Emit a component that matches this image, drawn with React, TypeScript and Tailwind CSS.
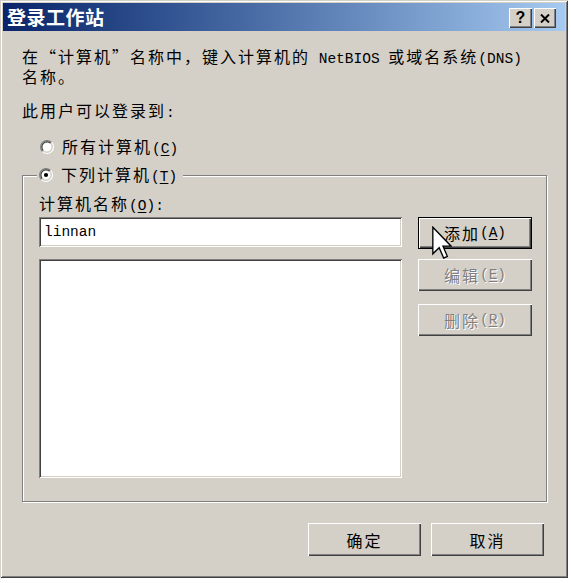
import type React from "react";

const cjk = "font-['Noto_Sans_CJK_SC',sans-serif]";
const mono = "font-['Liberation_Mono','Noto_Sans_CJK_SC',monospace] text-[14.5px] tracking-normal";

function Mn({children}: {children: React.ReactNode}) {
  return <span className={mono}>{children}</span>;
}

function Key({k}: {k: string}) {
  return (
    <Mn>
      (<u className="underline-offset-2">{k}</u>)
    </Mn>
  );
}

function Radio({checked}: {checked?: boolean}) {
  return (
    <svg width="14" height="14" viewBox="0 0 12 12" className="shrink-0">
      <circle cx="6" cy="6" r="4.2" fill="#fff" />
      <path d="M2.11 9.89 A5.5 5.5 0 0 1 9.89 2.11" stroke="#808080" fill="none" />
      <path d="M9.89 2.11 A5.5 5.5 0 0 1 2.11 9.89" stroke="#fff" fill="none" />
      <path d="M2.82 9.18 A4.5 4.5 0 0 1 9.18 2.82" stroke="#404040" fill="none" />
      <path d="M9.18 2.82 A4.5 4.5 0 0 1 2.82 9.18" stroke="#D4D0C8" fill="none" />
      {checked && <circle cx="6" cy="6" r="1.8" fill="#000" />}
    </svg>
  );
}

function Button({children, disabled, isDefault, className = ""}: {children: React.ReactNode; disabled?: boolean; isDefault?: boolean; className?: string}) {
  return (
    <div
      className={`flex items-center justify-center bg-[#D4D0C8] text-[16px] leading-[16px] ${
        isDefault
          ? "border border-black shadow-[inset_1px_1px_#fff,inset_-1px_-1px_#404040,inset_-2px_-2px_#808080]"
          : "shadow-[inset_1px_1px_#fff,inset_-1px_-1px_#404040,inset_-2px_-2px_#808080]"
      } ${disabled ? "text-[#808080] [text-shadow:1px_1px_0_#fff]" : "text-black"} ${className}`}
    >
      {children}
    </div>
  );
}

function Cursor() {
  return (
    <svg width="20" height="34" viewBox="0 0 12 20" className="absolute left-[14px] top-[9px] z-10">
      <path d="M0.5 0.5 L0.5 16.5 L4.3 12.8 L7 19 L9.2 18 L6.6 11.9 L11.5 11.9 Z" fill="#fff" stroke="#000" strokeWidth="0.8" strokeLinejoin="miter" />
    </svg>
  );
}

function App() {
  return (
    <div className={`w-[571px] h-[583px] bg-white ${cjk}`}>
      <div className="w-[568px] h-[578px] bg-[#D4D0C8] p-[3px] flex flex-col shadow-[inset_1px_1px_#D4D0C8,inset_-1px_-1px_#404040,inset_2px_2px_#fff,inset_-2px_-2px_#808080]">
        {/* title bar */}
        <div className="h-[28px] flex items-center bg-gradient-to-r from-[#0A246A] to-[#A6CAF0] pl-[4px] pr-[9px]">
          <span className="text-white font-bold text-[19px] leading-[20px] tracking-[0.5px]">登录工作站</span>
          <div className="ml-auto flex gap-[2px] mt-[2px]">
            <Button className="w-[23px] h-[20px] font-['Liberation_Sans',sans-serif] font-bold text-[15px]">?</Button>
            <Button className="w-[22px] h-[20px]">
              <svg width="10" height="9" viewBox="0 0 10 9">
                <path d="M1 0.5 L9 8.5 M9 0.5 L1 8.5" stroke="#000" strokeWidth="2" />
              </svg>
            </Button>
          </div>
        </div>

        <div className="flex flex-col px-[19px] text-[16px] leading-[16px] tracking-[2px] text-black">
          <p className="mt-[17px] leading-[17px] whitespace-nowrap">
            在“计算机”名称中，键入计算机的<Mn> NetBIOS </Mn>或域名系统<Mn>(DNS)</Mn>
            <br />
            名称。
          </p>
          <p className="mt-[17px]">此用户可以登录到<Mn>:</Mn></p>

          <div className="mt-[18px] ml-[18px] flex items-center gap-[8px] h-[16px]">
            <Radio />
            <span>所有计算机<Key k="C" /></span>
          </div>

          <fieldset className="mt-[12px] border border-[#808080] shadow-[1px_1px_#fff,inset_1px_1px_#fff] pl-[16px] pr-[14px] pb-[23px]">
            <legend className="-ml-[2px] px-[2px] bg-[#D4D0C8] flex items-center gap-[8px] h-[16px]">
              <Radio checked />
              <span className="pr-[4px]">下列计算机<Key k="T" /></span>
            </legend>

            <p className="mt-[12px]">计算机名称<Key k="O" /><Mn>:</Mn></p>

            <div className="mt-[3px] flex gap-[16px]">
              <div className="flex flex-col w-[363px]">
                <div className="h-[30px] bg-white flex items-center pl-[5px] shadow-[inset_1px_1px_#808080,inset_-1px_-1px_#fff,inset_2px_2px_#404040,inset_-2px_-2px_#D4D0C8]">
                  <span className={mono}>linnan</span>
                </div>
                <div className="mt-[12px] h-[219px] bg-white shadow-[inset_1px_1px_#808080,inset_-1px_-1px_#fff,inset_2px_2px_#404040,inset_-2px_-2px_#D4D0C8]" />
              </div>
              <div className="flex flex-col w-[114px]">
                <div className="relative">
                  <Button isDefault className="h-[32px]">
                    添加<Key k="A" />
                  </Button>
                  <Cursor />
                </div>
                <Button disabled className="mt-[10px] h-[32px]">
                  编辑<Key k="E" />
                </Button>
                <Button disabled className="mt-[13px] h-[32px]">
                  删除<Key k="R" />
                </Button>
              </div>
            </div>
          </fieldset>

          <div className="mt-[21px] flex justify-end gap-[10px] pr-[2px]">
            <Button className="w-[113px] h-[33px]">确定</Button>
            <Button className="w-[113px] h-[33px]">取消</Button>
          </div>
        </div>
      </div>
    </div>
  );
}

export default App;
